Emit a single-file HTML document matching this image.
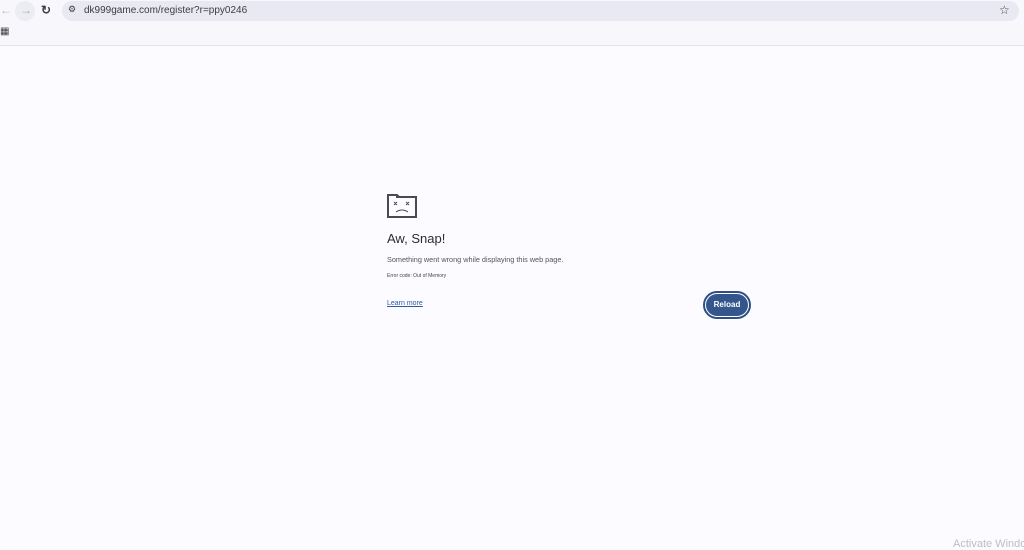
<!DOCTYPE html>
<html><head><style>
html,body{margin:0;width:1024px;height:550px;overflow:hidden}
body{background:#fcfbff;font-family:"Liberation Sans",sans-serif;position:relative}
.top{position:absolute;left:0;top:0;width:1024px;height:45px;background:#f8f8fc;border-bottom:1px solid #e4e3ea}
.url{position:absolute;left:62px;top:1px;width:957px;height:20px;background:#e8e9f2;border-radius:10px}
.t{position:absolute;color:#3c3c44;white-space:nowrap}
</style></head><body>
<div class="top">
 <div style="position:absolute;left:15px;top:1px;width:20px;height:20px;border-radius:10px;background:#ecedf2"></div>
 <div class="t" style="left:0;top:3px;font-size:12px;color:#bbb">←</div>
 <div class="t" style="left:20px;top:3px;font-size:12px;color:#aaa">→</div>
 <div class="t" style="left:41px;top:3px;font-size:12px;font-weight:bold">↻</div>
 <div class="url">
  <div class="t" style="left:6px;top:3px;font-size:9px">⚙</div>
  <div class="t" style="left:22px;top:4px;font-size:10px">dk999game.com/register?r=ppy0246</div>
  <div class="t" style="left:937px;top:2px;font-size:12px">☆</div>
 </div>
 <div class="t" style="left:0;top:26px;font-size:10px">▦</div>
</div>
<svg style="position:absolute;left:387px;top:192px" width="30" height="26" viewBox="0 0 30 26" fill="none" stroke="#4a4a50" stroke-width="2">
 <path d="M1 3h9l2 2h17v20H1z"/><path d="M10 3v2h10" />
 <path d="M7 10l3 3M10 10l-3 3M19 10l3 3M22 10l-3 3" stroke-width="1"/>
 <path d="M9 20q6-4 12 0" stroke-width="1"/>
</svg>
<div class="t" style="left:387px;top:231px;font-size:13px;color:#2c2c33">Aw, Snap!</div>
<div class="t" style="left:387px;top:255px;font-size:7.3px;color:#555">Something went wrong while displaying this web page.</div>
<div class="t" style="left:387px;top:273px;font-size:5px;color:#444">Error code: Out of Memory</div>
<div class="t" style="left:387px;top:300px;font-size:7px;color:#2f5a9c;text-decoration:underline">Learn more</div>
<div style="position:absolute;left:703px;top:291px;width:44px;height:24px;border:2px solid #2d4f85;border-radius:14px;background:#fff"></div>
<div style="position:absolute;left:706px;top:294px;width:42px;height:22px;border-radius:11px;background:#34568c;color:#fff;font-size:8px;font-weight:bold;text-align:center;line-height:22px">Reload</div>
<div class="t" style="left:953px;top:538px;font-size:11px;color:#bdbdc3">Activate Windows</div>
</body></html>
